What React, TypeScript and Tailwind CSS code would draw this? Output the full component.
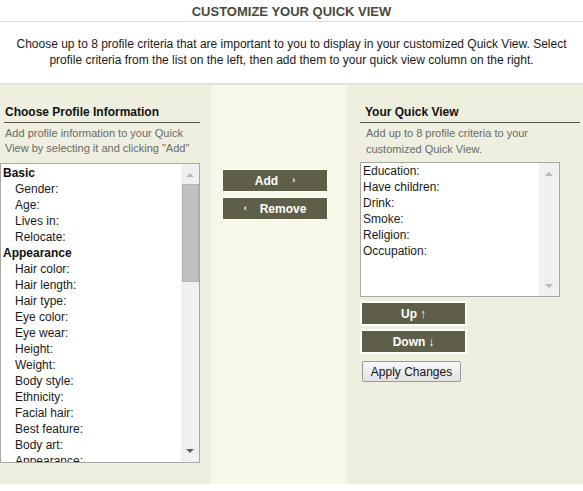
import React from "react";

const leftItems: { t: string; h?: boolean }[] = [
  { t: "Basic", h: true },
  { t: "Gender:" },
  { t: "Age:" },
  { t: "Lives in:" },
  { t: "Relocate:" },
  { t: "Appearance", h: true },
  { t: "Hair color:" },
  { t: "Hair length:" },
  { t: "Hair type:" },
  { t: "Eye color:" },
  { t: "Eye wear:" },
  { t: "Height:" },
  { t: "Weight:" },
  { t: "Body style:" },
  { t: "Ethnicity:" },
  { t: "Facial hair:" },
  { t: "Best feature:" },
  { t: "Body art:" },
  { t: "Appearance:" },
];

const rightItems = ["Education:", "Have children:", "Drink:", "Smoke:", "Religion:", "Occupation:"];

function UpArrow() {
  return (
    <svg width="8" height="5" viewBox="0 0 8 5">
      <path d="M0 5 L4 1 L8 5 Z" fill="#b8b8b8" />
    </svg>
  );
}
function DownArrow({ c = "#606060" }: { c?: string }) {
  return (
    <svg width="8" height="5" viewBox="0 0 8 5">
      <path d="M0 0 L8 0 L4 4 Z" fill={c} />
    </svg>
  );
}

export default function App() {
  return (
    <div
      className="w-[583px] h-[491px] bg-white overflow-hidden text-[12px] text-[#111]"
      style={{ fontFamily: '"Liberation Sans", Arial, sans-serif' }}
    >
      <div className="h-[22px] border-b border-[#dcdcdc] text-center text-[13px] font-bold leading-[22px] text-[#4a493a] pt-[1px]">
        CUSTOMIZE YOUR QUICK VIEW
      </div>
      <div className="h-[61px] pt-[14px] text-center leading-[16px] text-[#1a1a1a] px-[6px]">
        Choose up to 8 profile criteria that are important to you to display in your customized Quick View. Select
        <br />
        profile criteria from the list on the left, then add them to your quick view column on the right.
      </div>
      <div className="h-[2px] bg-[#e2e2da]" />
      <div className="flex h-[399px]">
        {/* left */}
        <div className="w-[210px] bg-[#efefdf] pt-[20px]">
          <div className="ml-[4px] mr-[10px] border-b border-[#55554a] pl-[1px] pb-[2px] font-bold leading-[15px] text-[#111]">
            Choose Profile Information
          </div>
          <div className="ml-[5px] mt-[3px] text-[11px] leading-[15px] text-[#6a6a6a]">
            Add profile information to your Quick
            <br />
            View by selecting it and clicking "Add"
          </div>
          <div className="mt-[7px] w-[200px] h-[300px] border border-[#a8a8a0] bg-white flex">
            <div className="flex-1 overflow-hidden pt-[1px]">
              {leftItems.map((it, i) => (
                <div
                  key={i}
                  className={`leading-[16px] whitespace-nowrap ${it.h ? "pl-[2px] font-bold text-[#111]" : "pl-[14px] text-[#1a1a1a]"}`}
                >
                  {it.t}
                </div>
              ))}
            </div>
            <div className="w-[18px] bg-[#f0f0f0] flex flex-col items-center">
              <div className="h-[20px] flex items-center justify-center">
                <UpArrow />
              </div>
              <div className="w-[17px] h-[98px] bg-[#c1c1c1] border border-[#b4b4b4]" />
              <div className="flex-1" />
              <div className="h-[22px] flex items-center justify-center">
                <DownArrow />
              </div>
            </div>
          </div>
        </div>
        {/* middle */}
        <div className="w-[137px] bg-[#f8f8ea] border-l border-[#f4f4e8] pt-[84px] pl-[11px]">
          <div className="w-[106px] h-[23px] bg-[#5f5e48] border border-white flex items-center justify-center text-white font-bold">
            <span>Add</span>
            <span className="ml-[14px] text-[9px]">›</span>
          </div>
          <div className="mt-[5px] w-[106px] h-[23px] bg-[#5f5e48] border border-white flex items-center justify-center text-white font-bold">
            <span className="mr-[13px] text-[9px]">‹</span>
            <span>Remove</span>
          </div>
        </div>
        {/* right */}
        <div className="flex-1 bg-[#efefdf] pt-[20px]">
          <div className="ml-[13px] w-[220px] border-b border-[#55554a] pl-[5px] pb-[2px] font-bold leading-[15px] text-[#111]">
            Your Quick View
          </div>
          <div className="ml-[19px] mt-[2px] text-[11px] leading-[16px] text-[#6a6a6a]">
            Add up to 8 profile criteria to your
            <br />
            customized Quick View.
          </div>
          <div className="ml-[13px] mt-[5px] w-[200px] h-[135px] border border-[#a8a8a0] bg-white flex">
            <div className="flex-1 overflow-hidden pl-[2px]">
              {rightItems.map((t) => (
                <div key={t} className="leading-[16px] text-[#1a1a1a]">
                  {t}
                </div>
              ))}
            </div>
            <div className="w-[20px] bg-[#f0f0f0] flex flex-col items-center">
              <div className="h-[20px] flex items-center justify-center">
                <UpArrow />
              </div>
              <div className="flex-1" />
              <div className="h-[20px] flex items-center justify-center">
                <DownArrow c="#b8b8b8" />
              </div>
            </div>
          </div>
          <div className="ml-[13px] mt-[4px] w-[107px] h-[25px] bg-[#5f5e48] border-2 border-white flex items-center justify-center text-white font-bold">
            Up <span className="ml-[3px] font-normal">↑</span>
          </div>
          <div className="ml-[13px] mt-[3px] w-[107px] h-[25px] bg-[#5f5e48] border-2 border-white flex items-center justify-center text-white font-bold">
            Down <span className="ml-[3px] font-normal">↓</span>
          </div>
          <div className="ml-[15px] mt-[7px] w-[99px] h-[21px] border border-[#9a9a9a] rounded-[2px] bg-gradient-to-b from-[#f8f8f8] to-[#e2e2e2] flex items-center justify-center text-[#111] leading-none">
            Apply Changes
          </div>
        </div>
      </div>
    </div>
  );
}
